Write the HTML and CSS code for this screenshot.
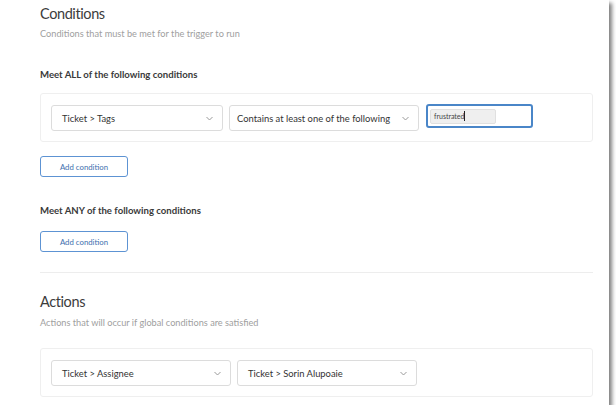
FILE: index.html
```html
<!DOCTYPE html>
<html lang="en">

<head>
    <meta charset="UTF-8">
    <title>Trigger conditions</title>
    <link rel="stylesheet" href="styles.css">
</head>

<body>
    <div class="panel">
        <h2>Conditions</h2>
        <p class="hint">Conditions that must be met for the trigger to run</p>

        <h3 class="group-title">Meet ALL of the following conditions</h3>
        <div class="rule-box">
            <div class="select sel-field">
                <span>Ticket &gt; Tags</span>
                <svg class="chev" width="7" height="5" viewBox="0 0 7 5"><path d="M0.5 1 L3.5 4 L6.5 1" fill="none" stroke="#9a9a9a" stroke-width="1"/></svg>
            </div>
            <div class="select sel-op">
                <span>Contains at least one of the following</span>
                <svg class="chev" width="7" height="5" viewBox="0 0 7 5"><path d="M0.5 1 L3.5 4 L6.5 1" fill="none" stroke="#9a9a9a" stroke-width="1"/></svg>
            </div>
            <div class="tag-input">
                <span class="tag">frustrated<span class="caret"></span></span>
            </div>
        </div>
        <button class="add-btn">Add condition</button>

        <h3 class="group-title any">Meet ANY of the following conditions</h3>
        <button class="add-btn">Add condition</button>

        <hr class="divider">

        <h2>Actions</h2>
        <p class="hint">Actions that will occur if global conditions are satisfied</p>
        <div class="rule-box actions">
            <div class="select sel-field">
                <span>Ticket &gt; Assignee</span>
                <svg class="chev" width="7" height="5" viewBox="0 0 7 5"><path d="M0.5 1 L3.5 4 L6.5 1" fill="none" stroke="#9a9a9a" stroke-width="1"/></svg>
            </div>
            <div class="select sel-value">
                <span>Ticket &gt; Sorin Alupoaie</span>
                <svg class="chev" width="7" height="5" viewBox="0 0 7 5"><path d="M0.5 1 L3.5 4 L6.5 1" fill="none" stroke="#9a9a9a" stroke-width="1"/></svg>
            </div>
        </div>
    </div>
</body>

</html>
```

FILE: styles.css
```css
body {
    margin: 0;
    background: #fff;
    font-family: Lato, "Noto Sans", sans-serif;
    color: #333;
}

.panel {
    width: 609px;
    height: 405px;
    box-sizing: border-box;
    padding: 4px 16px 0 40px;
    background: #fff;
    box-shadow: 3px 3px 4px rgba(0, 0, 0, 0.5);
    overflow: hidden;
}

h2 {
    margin: 0;
    font-size: 14.5px;
    line-height: 20px;
    font-weight: 400;
    letter-spacing: -0.4px;
    color: #3c3c3c;
}

.hint {
    margin: 3px 0 0;
    font-size: 9.2px;
    line-height: 13px;
    color: #a0a0a0;
}

.group-title {
    margin: 28px 0 0;
    font-size: 9.6px;
    line-height: 13px;
    font-weight: 700;
    color: #3a3a3a;
}

.group-title.any {
    margin-top: 27px;
}

.rule-box {
    margin-top: 12px;
    height: 49px;
    box-sizing: border-box;
    border: 1px solid #efefef;
    border-radius: 3px;
    padding: 11px 10px 0;
    display: flex;
    gap: 6px;
    align-items: flex-start;
}

.select {
    height: 26px;
    box-sizing: border-box;
    border: 1px solid #dcdcdc;
    border-radius: 3px;
    padding: 0 9px 0 10px;
    display: flex;
    align-items: center;
    justify-content: space-between;
    font-size: 9.4px;
    color: #333;
}

.sel-field {
    width: 172px;
}

.sel-op {
    width: 190px;
    padding-left: 7px;
}

.actions .sel-field,
.sel-value {
    width: 180px;
}

.chev {
    flex: none;
}

.tag-input {
    margin-left: 1px;
    width: 107px;
    height: 24px;
    margin-top: -1px;
    box-sizing: border-box;
    border: 2px solid #4a86c8;
    border-radius: 3px;
    padding-left: 2px;
    display: flex;
    align-items: center;
}

.tag {
    display: inline-flex;
    align-items: center;
    width: 66px;
    height: 15px;
    box-sizing: border-box;
    padding-left: 3px;
    background: #efefef;
    border: 1px solid #e0e0e0;
    border-radius: 2px;
    font-size: 7px;
    color: #444;
}

.caret {
    width: 1px;
    height: 10px;
    background: #222;
}

.add-btn {
    display: block;
    margin-top: 14px;
    width: 88px;
    height: 21px;
    border: 1px solid #5d93d3;
    border-radius: 3px;
    background: #fff;
    font-family: inherit;
    font-size: 7.8px;
    color: #3e6fae;
    padding: 0;
}

.divider {
    margin: 20px 0 0;
    border: 0;
    border-top: 1px solid #ededed;
}

.divider + h2 {
    margin-top: 19px;
}

.divider ~ .hint {
    margin-top: 4px;
}

.actions {
    margin-top: 19px;
}
```
